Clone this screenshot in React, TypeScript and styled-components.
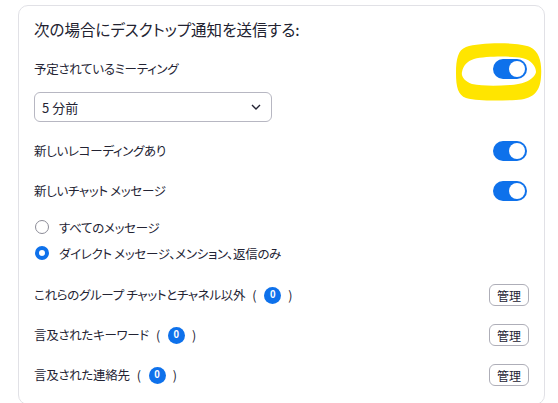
import React, { useState } from "react";
import styled, { createGlobalStyle } from "styled-components";

const Global = createGlobalStyle`
  html, body { margin: 0; padding: 0; background: #ffffff; }
  body {
    font-family: "Noto Sans CJK JP", "Noto Sans", sans-serif;
    color: #232333;
    font-feature-settings: "palt";
  }
  * { box-sizing: border-box; }
`;

const Page = styled.div`
  width: 558px;
  height: 403px;
  padding: 5px 0 0 18px;
  overflow: hidden;
`;

const Card = styled.section`
  width: 527px;
  height: 400px;
  border: 1px solid #e1e1e6;
  border-radius: 10px;
  padding: 0 16px 0 15px;
  display: flex;
  flex-direction: column;
`;

const Title = styled.h2`
  margin: 13px 0 0;
  height: 20px;
  line-height: 20px;
  font-size: 15.5px;
  font-weight: 400;
  color: #222230;
`;

const Row = styled.div<{ $h: number; $mt?: number }>`
  display: flex;
  align-items: center;
  justify-content: space-between;
  height: ${(p) => p.$h}px;
  margin-top: ${(p) => p.$mt ?? 0}px;
`;

const Label = styled.span`
  font-size: 12.5px;
  letter-spacing: -0.3px;
  line-height: 18px;
  display: flex;
  align-items: center;
  color: #232333;
`;

const Paren = styled.span`
  margin: 0 8px 0 7px;
`;

const Badge = styled.span`
  width: 17px;
  height: 17px;
  border-radius: 50%;
  background: #0e71eb;
  color: #fff;
  font-family: "Liberation Sans", sans-serif;
  font-weight: 700;
  font-size: 10px;
  letter-spacing: 0;
  display: inline-flex;
  align-items: center;
  justify-content: center;
`;

const ToggleSlot = styled.div`
  position: relative;
  display: flex;
`;

const Highlight = styled.svg`
  position: absolute;
  left: -37px;
  top: -16px;
  width: 86px;
  height: 58px;
  pointer-events: none;
`;

const Track = styled.button<{ $on: boolean }>`
  position: relative;
  width: 34px;
  height: 20px;
  border-radius: 10px;
  border: none;
  padding: 2px;
  margin-right: 1px;
  background: ${(p) => (p.$on ? "#0e71eb" : "#babac5")};
  display: flex;
  justify-content: ${(p) => (p.$on ? "flex-end" : "flex-start")};
  cursor: pointer;
`;

const Knob = styled.span`
  width: 16px;
  height: 16px;
  border-radius: 50%;
  background: #fff;
`;

const Select = styled.div`
  margin-top: 8px;
  width: 238px;
  height: 30px;
  border: 1px solid #b7b7c2;
  border-radius: 6px;
  display: flex;
  align-items: center;
  justify-content: space-between;
  padding: 0 10px 0 7px;
  font-size: 13px;
  color: #232333;
`;

const RadioRow = styled.label<{ $mt?: number }>`
  display: flex;
  align-items: center;
  height: 26px;
  margin-top: ${(p) => p.$mt ?? 0}px;
  font-size: 12.5px;
  letter-spacing: -0.3px;
  gap: 10px;
  padding-left: 1px;
  cursor: pointer;
`;

const RadioDot = styled.span<{ $on: boolean }>`
  width: 14px;
  height: 14px;
  border-radius: 50%;
  border: ${(p) => (p.$on ? "4px solid #0e71eb" : "1px solid #8c8c97")};
  background: #fff;
`;

const Manage = styled.button`
  width: 40px;
  height: 22px;
  border: 1px solid #aeaeb8;
  border-radius: 6px;
  background: #fff;
  font-family: "Noto Sans CJK JP", sans-serif;
  font-size: 12px;
  color: #232333;
  padding: 0;
  margin-right: -1px;
`;

const Toggle = ({ on, onClick }: { on: boolean; onClick: () => void }) => (
  <Track $on={on} onClick={onClick}>
    <Knob />
  </Track>
);

const Chevron = () => (
  <svg width="10" height="6" viewBox="0 0 10 6">
    <path d="M1 1l4 4 4-4" fill="none" stroke="#232333" strokeWidth="1.4" />
  </svg>
);

const Marker = () => (
  <Highlight viewBox="0 0 86 58">
    <path
      fillRule="evenodd"
      fill="#ffe500"
      d="M10 4 C25 -1 62 -1 74 4 C84 9 86 20 85 34 C84 50 76 56 60 57 C40 58 22 58 10 55 C2 52 0 44 0 30 C0 16 2 7 10 4 Z
         M18 16 C30 13 56 13 66 15 C76 17 80 24 80 29 C79 34 72 41 55 42 C40 43 26 43 16 41 C8 38 5 33 6 29 C7 23 11 18 18 16 Z"
    />
  </Highlight>
);

const Count = ({ children }: { children: React.ReactNode }) => (
  <Label>
    {children}
    <Paren>(</Paren>
    <Badge>0</Badge>
    <Paren>)</Paren>
  </Label>
);

export default function App() {
  const [t, setT] = useState([true, true, true]);
  const [radio, setRadio] = useState(1);
  const flip = (i: number) => setT((s) => s.map((v, j) => (j === i ? !v : v)));

  return (
    <Page>
      <Global />
      <Card>
        <Title>次の場合にデスクトップ通知を送信する:</Title>
        <Row $h={30} $mt={15}>
          <Label>予定されているミーティング</Label>
          <ToggleSlot>
            <Marker />
            <Toggle on={t[0]} onClick={() => flip(0)} />
          </ToggleSlot>
        </Row>
        <Select>
          <span>5 分前</span>
          <Chevron />
        </Select>
        <Row $h={40} $mt={9}>
          <Label>新しいレコーディングあり</Label>
          <Toggle on={t[1]} onClick={() => flip(1)} />
        </Row>
        <Row $h={40}>
          <Label>新しいチャット メッセージ</Label>
          <Toggle on={t[2]} onClick={() => flip(2)} />
        </Row>
        <RadioRow $mt={3} onClick={() => setRadio(0)}>
          <RadioDot $on={radio === 0} />
          すべてのメッセージ
        </RadioRow>
        <RadioRow onClick={() => setRadio(1)}>
          <RadioDot $on={radio === 1} />
          ダイレクト メッセージ、メンション、返信のみ
        </RadioRow>
        <Row $h={40} $mt={9}>
          <Count>これらのグループ チャットとチャネル以外</Count>
          <Manage>管理</Manage>
        </Row>
        <Row $h={40}>
          <Count>言及されたキーワード</Count>
          <Manage>管理</Manage>
        </Row>
        <Row $h={40}>
          <Count>言及された連絡先</Count>
          <Manage>管理</Manage>
        </Row>
      </Card>
    </Page>
  );
}
